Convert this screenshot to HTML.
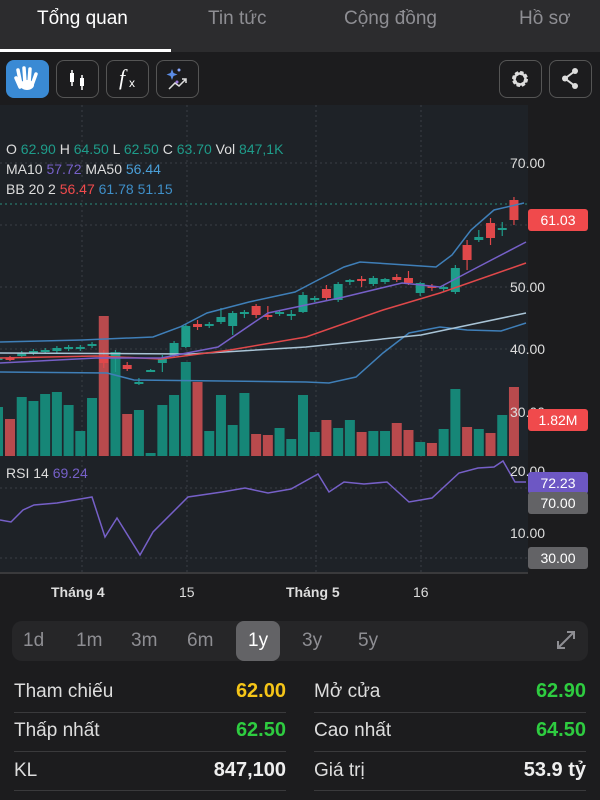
<!DOCTYPE html>
<html><head><meta charset="utf-8"><style>
*{margin:0;padding:0;box-sizing:border-box}
body{width:600px;height:800px;background:#1c1c1e;font-family:"Liberation Sans",sans-serif;color:#fff;position:relative;overflow:hidden}
.tabs{position:absolute;left:0;top:0;width:600px;height:52px;background:#2c2c2e}
.tab{position:absolute;top:8px;font-size:19px;color:#8e8e93}
.ul{position:absolute;left:0;top:49px;width:171px;height:3px;background:#fff}
.btn{position:absolute;top:60px;width:43px;height:38px;border:1.5px solid #555;border-radius:8px}
.a{position:absolute;font-size:14px;white-space:nowrap}
.ax{position:absolute;font-size:14px;color:#ddd;left:510px}
.box{position:absolute;left:528px;width:60px;height:22px;font-size:14px;text-align:center;line-height:22px;border-radius:3px}
.per{position:absolute;left:12px;top:621px;width:576px;height:40px;background:#262628;border-radius:10px}
.p{position:absolute;top:630px;font-size:19px;color:#8e8e93}
.r{position:absolute;font-size:19px}
.v{font-weight:bold;font-size:20px}
.sep{position:absolute;height:1px;background:#3a3a3c}
</style></head><body>
<div class="tabs">
<div class="tab" style="left:37px;color:#fff">Tổng quan</div>
<div class="tab" style="left:208px">Tin tức</div>
<div class="tab" style="left:344px">Cộng đồng</div>
<div class="tab" style="left:519px">Hồ sơ</div>
<div class="ul"></div>
</div>
<div class="btn" style="left:6px;background:#3a8ad4;border-color:#3a8ad4"><svg width="40" height="35" viewBox="0 0 40 35"><path d="M13 26 L9 17 M14 24 L11 9 M18 22 L17 7 M22 22 L23 8 M25 24 L29 13" stroke="#fff" stroke-width="3.5" stroke-linecap="round" fill="none"/><ellipse cx="20" cy="24" rx="7" ry="5" fill="#fff"/></svg></div>
<div class="btn" style="left:56px"><svg width="40" height="35"><path d="M15 9v16M25 14v15" stroke="#fff" stroke-width="1.5"/><rect x="13" y="12" width="4" height="9" fill="#fff"/><rect x="23" y="17" width="4" height="8" fill="#fff"/></svg></div>
<div class="btn" style="left:106px"><span style="position:absolute;left:12px;top:4px;font-family:'Liberation Serif';font-style:italic;font-size:22px">f</span><span style="position:absolute;left:22px;top:15px;font-size:12px">x</span></div>
<div class="btn" style="left:156px"><svg width="40" height="35"><path d="M15 8l1.5 4 4 1.5-4 1.5-1.5 4-1.5-4-4-1.5 4-1.5z" fill="#5b8de8"/><circle cx="22" cy="9" r="1.5" fill="#8aa8ff"/><path d="M12 28l6-6 4 3 7-7M25 18h4v4" stroke="#ddd" stroke-width="1.5" fill="none"/><circle cx="20" cy="21" r="1.5" fill="#a07be0"/></svg></div>
<div class="btn" style="left:499px"><svg width="40" height="35"><circle cx="20" cy="18" r="6" fill="none" stroke="#ddd" stroke-width="4" stroke-dasharray="3 1.7"/><circle cx="20" cy="18" r="5.5" fill="none" stroke="#ddd" stroke-width="2.5"/></svg></div>
<div class="btn" style="left:549px"><svg width="40" height="35"><path d="M25 10L15 17.5 25 25" stroke="#ddd" stroke-width="2" fill="none"/><circle cx="25" cy="10" r="3" fill="#ddd"/><circle cx="15" cy="17.5" r="3" fill="#ddd"/><circle cx="25" cy="25" r="3" fill="#ddd"/></svg></div>

<svg style="position:absolute;left:0;top:0" width="600" height="800" id="ch">
<rect x="0" y="105" width="528" height="468" fill="#1e2227"/>
<rect x="0" y="340" width="528" height="110" fill="#1f2731" opacity=".5"/>
<g stroke="#3a3f45" stroke-dasharray="2 3" stroke-width="1">
<line x1="0" y1="163" x2="528" y2="163"/><line x1="0" y1="287" x2="528" y2="287"/><line x1="0" y1="349" x2="528" y2="349"/><line x1="0" y1="225" x2="528" y2="225"/>
<line x1="82" y1="105" x2="82" y2="573"/><line x1="187" y1="105" x2="187" y2="573"/><line x1="316" y1="105" x2="316" y2="573"/><line x1="421" y1="105" x2="421" y2="573"/>
<line x1="0" y1="488" x2="528" y2="488"/><line x1="0" y1="558" x2="528" y2="558"/>
</g>
<line x1="0" y1="204" x2="528" y2="204" stroke="#2a8f7e" stroke-dasharray="2 3"/>
<g id="vol"></g><g id="cdl"></g>
<g fill="none" stroke-width="1.5">
<polyline stroke="#3f7fb8" points="0,342 82,340 153,337 180,327 207,313 249,302 295,292 318,280 344,267 360,262 406,265 436,267 452,255 471,230 494,210 524,203"/>
<polyline stroke="#3f7fb8" points="0,372 107,373 134,380 306,382 329,383 356,377 383,353 409,333 440,327 467,330 501,331 526,323"/>
<polyline stroke="#a9c4d6" points="0,353 191,354 306,347 421,335 526,313"/>
<polyline stroke="#e0484a" points="0,358 96,356 161,359 230,350 306,337 383,310 440,293 526,263"/>
<polyline stroke="#7660c8" points="0,363 96,358 161,358 218,347 268,313 344,297 402,283 440,287 478,267 526,242"/>
<polyline stroke="#7660c8" points="0,520 11,522 23,510 34,505 57,503 92,497 105,537 117,518 140,555 153,532 188,497 222,492 245,488 268,493 291,489 318,474 329,492 344,482 364,484 387,482 409,502 432,498 459,473 478,468 494,467 503,461 515,482 526,482"/>
</g>
<line x1="0" y1="573" x2="528" y2="573" stroke="#3a3a3c" stroke-width="2"/>
</svg>
<script>
var vt=[407,419,397,401,394,392,405,431,398,316,352,414,410,453,405,395,362,382,431,395,425,393,434,435,428,439,395,432,420,428,420,432,431,431,423,430,442,443,429,389,427,429,433,415,387];
var red=[1,9,11,17,22,23,28,31,34,35,37,40,42,44];
var c=[[358,360,356,362],[358,359,356,361],[356,353,351,358],[353,351,349,355],[352,350,348,354],[351,348,346,353],[349,347,345,351],[349,347,345,351],[346,344,342,348],[355,363,350,368],[358,353,350,372],[365,369,362,371],[382,382,378,385],[371,370,369,372],[363,358,355,372],[356,343,341,357],[347,326,324,348],[324,327,320,330],[326,324,322,328],[322,317,308,324],[326,313,311,335],[314,312,310,318],[306,315,304,318],[315,317,306,320],[314,312,310,316],[316,314,310,320],[312,295,292,313],[300,298,296,302],[289,298,285,300],[300,284,282,302],[282,280,279,285],[279,281,276,287],[284,278,276,286],[282,279,278,284],[280,277,274,282],[278,283,271,285],[283,293,282,296],[288,286,284,291],[287,289,285,291],[292,268,265,294],[260,245,240,270],[237,240,230,242],[238,223,218,245],[230,228,222,236],[220,200,197,225],[201,218,175,222]];
var s='',v='';
for(var i=0;i<45;i++){var x=i==0?-2:10+(i-1)*11.72;var r=red.indexOf(i)>=0;var col=r?'#e0484a':'#1e9c8a';var vc=r?'#b94a4d':'#168677';
v+='<rect x="'+(x-5)+'" y="'+vt[i]+'" width="10" height="'+(456-vt[i])+'" fill="'+vc+'"/>';
var d=c[i],t=Math.min(d[0],d[1]),h=Math.max(Math.abs(d[0]-d[1]),2);
s+='<line x1="'+x+'" x2="'+x+'" y1="'+d[2]+'" y2="'+d[3]+'" stroke="'+col+'" stroke-width="1.2"/><rect x="'+(x-4.5)+'" y="'+t+'" width="9" height="'+h+'" fill="'+col+'"/>';}
document.getElementById('vol').innerHTML=v;document.getElementById('cdl').innerHTML=s;
</script>
<div class="a" style="left:6px;top:141px;color:#ddd">O <span style="color:#1e9c8a">62.90</span> H <span style="color:#1e9c8a">64.50</span> L <span style="color:#1e9c8a">62.50</span> C <span style="color:#1e9c8a">63.70</span> Vol <span style="color:#1e9c8a">847,1K</span></div>
<div class="a" style="left:6px;top:161px;color:#ddd">MA10 <span style="color:#7660c8">57.72</span> MA50 <span style="color:#4a9fd8">56.44</span></div>
<div class="a" style="left:6px;top:181px;color:#ddd">BB 20 2 <span style="color:#f04a4c">56.47</span> <span style="color:#3f8fc8">61.78</span> <span style="color:#3f8fc8">51.15</span></div>
<div class="ax" style="top:155px">70.00</div>
<div class="ax" style="top:279px">50.00</div>
<div class="ax" style="top:341px">40.00</div>
<div class="ax" style="top:404px">30.00</div>
<div class="box" style="top:209px;background:#f04a4c">61.03</div>
<div class="box" style="top:409px;background:#f04a4c">1.82M</div>
<div class="a" style="left:6px;top:465px;color:#ddd">RSI 14 <span style="color:#7660c8">69.24</span></div>
<div class="ax" style="top:463px">20.00</div>
<div class="box" style="top:472px;background:#6d57c4">72.23</div>
<div class="box" style="top:492px;background:#636366">70.00</div>
<div class="ax" style="top:525px">10.00</div>
<div class="box" style="top:547px;background:#636366">30.00</div>
<div class="a" style="left:51px;top:584px;font-weight:bold;color:#ddd">Tháng 4</div>
<div class="a" style="left:179px;top:584px;color:#ddd">15</div>
<div class="a" style="left:286px;top:584px;font-weight:bold;color:#ddd">Tháng 5</div>
<div class="a" style="left:413px;top:584px;color:#ddd">16</div>
<div class="per"></div>
<div style="position:absolute;left:236px;top:621px;width:44px;height:40px;background:#636366;border-radius:8px"></div>
<div class="p" style="left:23px">1d</div><div class="p" style="left:76px">1m</div><div class="p" style="left:131px">3m</div><div class="p" style="left:187px">6m</div><div class="p" style="left:248px;color:#fff">1y</div><div class="p" style="left:302px">3y</div><div class="p" style="left:358px">5y</div>
<svg style="position:absolute;left:555px;top:629px" width="22" height="22"><path d="M3 19L19 3M12 3h7v7M3 12v7h7" stroke="#8e8e93" stroke-width="2" fill="none"/></svg>
<div class="r" style="left:14px;top:681px;color:#ddd">Tham chiếu</div><div class="r v" style="left:200px;width:86px;text-align:right;top:680px;color:#f5c518">62.00</div>
<div class="r" style="left:314px;top:681px;color:#ddd">Mở cửa</div><div class="r v" style="left:480px;width:106px;text-align:right;top:680px;color:#2ecc40">62.90</div>
<div class="sep" style="left:14px;top:712px;width:272px"></div><div class="sep" style="left:314px;top:712px;width:272px"></div>
<div class="r" style="left:14px;top:720px;color:#ddd">Thấp nhất</div><div class="r v" style="left:200px;width:86px;text-align:right;top:719px;color:#2ecc40">62.50</div>
<div class="r" style="left:314px;top:720px;color:#ddd">Cao nhất</div><div class="r v" style="left:480px;width:106px;text-align:right;top:719px;color:#2ecc40">64.50</div>
<div class="sep" style="left:14px;top:751px;width:272px"></div><div class="sep" style="left:314px;top:751px;width:272px"></div>
<div class="r" style="left:14px;top:760px;color:#ddd">KL</div><div class="r v" style="left:150px;width:136px;text-align:right;top:759px;color:#eee">847,100</div>
<div class="r" style="left:314px;top:760px;color:#ddd">Giá trị</div><div class="r v" style="left:450px;width:136px;text-align:right;top:759px;color:#eee">53.9 tỷ</div>
<div class="sep" style="left:14px;top:790px;width:272px"></div><div class="sep" style="left:314px;top:790px;width:272px"></div>
</body></html>
